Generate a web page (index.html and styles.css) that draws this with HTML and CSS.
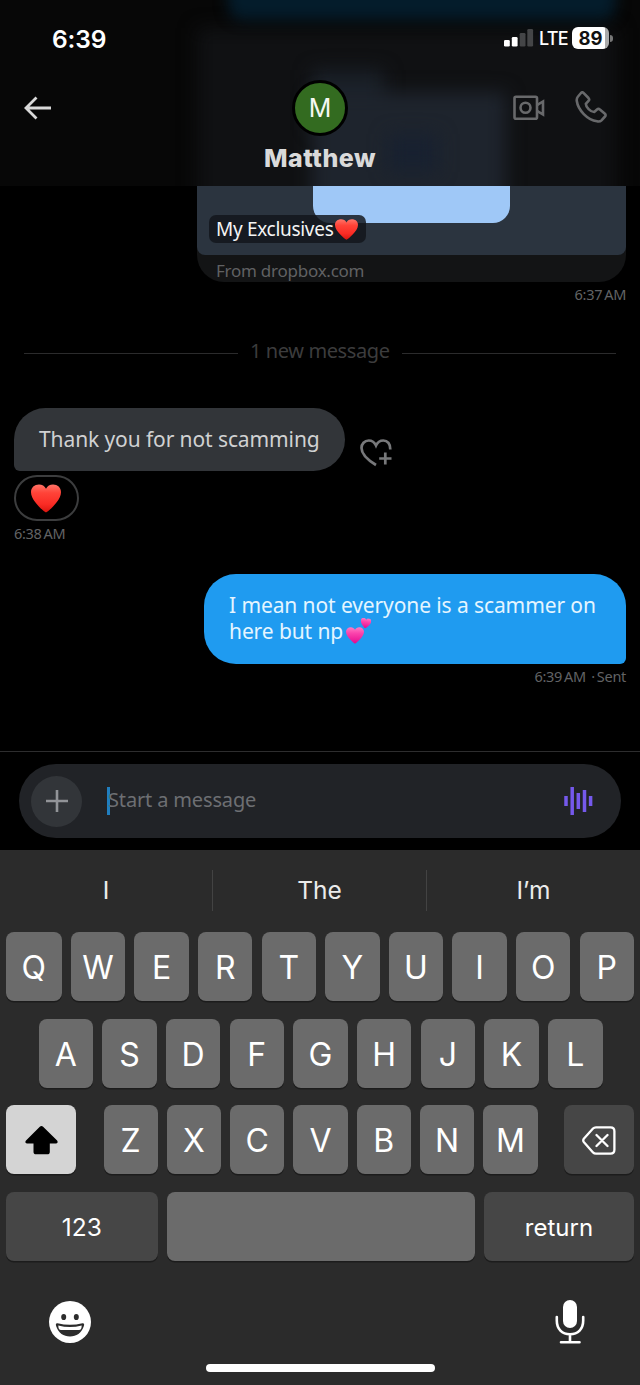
FILE: index.html
```html
<!DOCTYPE html>
<html lang="en">
<head>
<meta charset="utf-8">
<title>Matthew</title>
<link rel="stylesheet" href="styles.css">
</head>
<body>
<svg class="defs" width="0" height="0" aria-hidden="true">
  <defs>
    <linearGradient id="red" x1="0" y1="0" x2="0" y2="1"><stop offset="0" stop-color="#ff7468"/><stop offset=".3" stop-color="#ff4338"/><stop offset=".7" stop-color="#fa2c25"/><stop offset="1" stop-color="#d9150f"/></linearGradient>
    <linearGradient id="pink" x1="0" y1="0" x2="0" y2="1"><stop offset="0" stop-color="#ff7cc4"/><stop offset=".35" stop-color="#fb45ad"/><stop offset="1" stop-color="#e5098f"/></linearGradient>
    <symbol id="heart" viewBox="0 0 30 30" preserveAspectRatio="none"><path d="M15 29.500C13.500 29 0 17.500 0 8.500C0 3.500 3.500 .5 8 .5c3 0 5.700 1.500 7 4.500C16.300 2 19 .5 22 .5c4.500 0 8 3 8 8C30 17.500 16.500 29 15 29.500Z"/></symbol>
  </defs>
</svg>
<div class="phone">
  <header class="header">
    <div class="glow glow-card"></div>
    <div class="glow glow-blue"></div>
    <div class="glow glow-tab"></div>
    <div class="glow glow-folder"></div>
    <div class="glow glow-logo"></div>
    <div class="status">
      <span class="clock">6:39</span>
      <div class="indicators">
        <svg width="30" height="18" viewBox="0 0 30 18"><rect x="0" y="11" width="5.800" height="6.500" rx="1.300" fill="#fff"/><rect x="7.800" y="8" width="5.800" height="9.500" rx="1.300" fill="#fff"/><rect x="15.700" y="4" width="5.800" height="13.500" rx="1.300" fill="#444547"/><rect x="23.300" y="0" width="5.800" height="17.500" rx="1.300" fill="#444547"/></svg>
        <span class="lte">LTE</span>
        <span class="battery">89</span><i class="nub"></i>
      </div>
    </div>
    <div class="nav">
      <svg class="back" width="28" height="24" viewBox="0 0 28 24" fill="none" stroke="#d9d9d9" stroke-width="2.800"><path d="M27 12H2M12.500 1.500L2 12l10.500 10.500"/></svg>
      <div class="person"><div class="avatar">M</div><h1>Matthew</h1></div>
      <div class="calls">
        <svg width="32" height="26" viewBox="0 0 32 26" fill="none" stroke="#68696b" stroke-width="2.600"><rect x="1.500" y="1.800" width="22.500" height="22" rx="1.500"/><circle cx="12.500" cy="12.800" r="5"/><path d="M24 10.200L30 6.500v13l-6-3.700"/></svg>
        <svg width="32" height="32" viewBox="0 0 32 32" fill="none" stroke="#68696b" stroke-width="2.600" stroke-linejoin="round"><path d="M8.500 1.800L13.500 7c.8.900.8 2 0 2.800l-2.700 3C10.800 16 15.500 21 19.200 21l2.800-2.500c.9-.8 2-.8 2.900 0l5 4.200c.9.800.9 2 .1 2.800l-3.500 3.800c-1 1-3 1.300-4.500 1C12.500 29 3 19 1.800 10c-.3-2 .2-3.400 1.200-4.500l3-3.500c.7-.8 1.800-.9 2.500-.2Z"/></svg>
      </div>
    </div>
  </header>

  <main class="chat">
    <section class="link-card">
      <div class="preview"><div class="folder"></div>
        <div class="label">My Exclusives<svg class="em" width="23" height="21" fill="url(#red)"><use href="#heart"/></svg></div>
      </div>
      <div class="source">From dropbox.com</div>
    </section>
    <time class="time sent-time">6:37<span class="thin"></span>AM</time>
    <div class="divider"><i class="rule-left"></i><span>1 new message</span><i class="rule-right"></i></div>
    <div class="incoming">
      <div class="bubble grey">Thank you for not scamming</div>
      <svg width="32" height="28" viewBox="0 0 32 28" fill="none" stroke="#77787a" stroke-width="2.700"><path d="M16 26C7 20.500 1.500 15 1.500 9C1.500 5 4.500 1.500 8.700 1.500C12 1.500 14.600 3.500 16 6.500C17.400 3.500 20 1.500 23.300 1.500C27.500 1.500 30.500 5 30.300 10.500M25.300 13.500v12M19.200 19.500h12.300"/></svg>
    </div>
    <div class="reaction"><svg width="30" height="29" fill="url(#red)"><use href="#heart"/></svg></div>
    <time class="time">6:38<span class="thin"></span>AM</time>
    <div class="bubble blue">I mean not everyone is a scammer on<br>here but np<svg class="pair" width="26" height="26" viewBox="0 0 26 26" fill="url(#pink)"><use href="#heart" x="0" y="9" width="18" height="17"/><use href="#heart" x="14.500" y="0" width="10.500" height="10.500" transform="rotate(8 20 5)"/></svg></div>
    <time class="time sent-time">6:39<span class="thin"></span>AM <span class="sent">·<span class="thin"></span>Sent</span></time>
  </main>

  <div class="composer">
    <div class="field">
      <div class="plus"><svg width="22" height="22" viewBox="0 0 22 22" stroke="#929498" stroke-width="2.600"><path d="M11 0v22M0 11h22"/></svg></div>
      <i class="caret"></i><span class="placeholder">Start a message</span>
      <svg class="wave" width="30" height="30" viewBox="0 0 30 30" stroke="#7559ec" stroke-width="3.500"><path d="M2 10v10M8.200 1v28M14.300 7v16M20.500 4v22M26.600 10v10"/></svg>
    </div>
  </div>

  <section class="keyboard">
    <div class="suggest"><span>I</span><span>The</span><span>I’m</span></div>
    <div class="keys">
      <div class="row top"><b>Q</b><b>W</b><b>E</b><b>R</b><b>T</b><b>Y</b><b>U</b><b>I</b><b>O</b><b>P</b></div>
      <div class="row home"><b>A</b><b>S</b><b>D</b><b>F</b><b>G</b><b>H</b><b>J</b><b>K</b><b>L</b></div>
      <div class="row bottom">
        <b class="shift"><svg width="33" height="29" viewBox="0 0 33 29"><path d="M14.800.8c1-1 2.300-1 3.300 0l14 13.800c1 1.200.5 2.800-1 2.800h-6.300v8.300c0 1.800-.9 2.600-2.600 2.600H11.200c-1.800 0-2.700-.8-2.700-2.600v-8.300H2c-1.600 0-2.200-1.600-1-2.800Z" fill="#000"/></svg></b>
        <div class="letters"><b>Z</b><b>X</b><b>C</b><b>V</b><b>B</b><b>N</b><b>M</b></div>
        <b class="dark"><svg width="34" height="29" viewBox="0 0 34 29" fill="none" stroke="#fff" stroke-width="2.300" stroke-linejoin="round" stroke-linecap="round"><path d="M14 1.300h14.500c2.600 0 3.900 1.300 3.900 3.900v18.500c0 2.600-1.300 3.900-3.900 3.900H14c-1.300 0-2.200-.4-3-1.200L2 16.300c-1-1.200-1-2.500 0-3.700l9-10C11.800 1.700 12.700 1.300 14 1.300ZM14.500 9l11 11M25.500 9l-11 11"/></svg></b>
      </div>
      <div class="row last"><b class="dark">123</b><b></b><b class="dark ret">return</b></div>
    </div>
    <div class="tools">
      <svg width="42" height="42" viewBox="0 0 42 42"><circle cx="21" cy="21" r="21" fill="#fff"/><ellipse cx="14.700" cy="16" rx="2.500" ry="3.100" fill="#2c2c2c"/><ellipse cx="27.300" cy="16" rx="2.500" ry="3.100" fill="#2c2c2c"/><path d="M8.500 22.200Q21 25.500 33.500 22.200Q36 22 34.700 25.500C32.500 32 27.500 35.500 21 35.500S9.500 32 7.300 25.500Q6 22 8.500 22.200Z" fill="#2c2c2c"/><path d="M9.300 24.500Q21 27.500 32.700 24.500Q32.700 29 30 29H12Q9.300 29 9.300 24.500Z" fill="#fff"/></svg>
      <svg width="30" height="44" viewBox="0 0 30 44" fill="none" stroke="#fff" stroke-width="2.600" stroke-linecap="round"><rect x="8" y="0" width="14" height="28" rx="7" fill="#fff" stroke="none"/><path d="M1.800 17v3.500C1.800 29 7 34.200 15 34.200S28.200 29 28.200 20.500V17M15 35v7M6 42.300h18.500"/></svg>
    </div>
    <div class="home-bar"></div>
  </section>
</div>
</body>
</html>
```
FILE: styles.css
```css
* { box-sizing: border-box; }
body { margin: 0; background: #000; font-family: "Noto Sans", "Open Sans", sans-serif; }
svg { display: block; flex: none; }
.defs { position: absolute; }
.phone { width: 640px; height: 1385px; display: flex; flex-direction: column; overflow: hidden; }

.header { position: relative; height: 186px; background: #070707; overflow: hidden; flex: none; font-family: Inter, sans-serif; }
.status, .nav { position: relative; display: flex; justify-content: space-between; }
.glow { position: absolute; }
.glow-card { left: 197px; top: 28px; width: 420px; height: 190px; background: #101113; filter: blur(9px); }
.glow-blue { left: 228px; top: -30px; width: 388px; height: 50px; border-radius: 15px; background: #041c2b; filter: blur(7px); }
.glow-tab { left: 312px; top: 70px; width: 72px; height: 60px; background: #1a2028; filter: blur(9px); }
.glow-folder { left: 312px; top: 92px; width: 194px; height: 130px; background: #1e242d; filter: blur(9px); }
.glow-logo { left: 388px; top: 134px; width: 50px; height: 38px; background: #182130; filter: blur(9px); }
.status { height: 76px; padding: 0 27px 0 52px; align-items: center; color: #fff; }
.clock { font-size: 24.5px; font-weight: 600; line-height: 32px; padding-top: 1px; letter-spacing: -.1px; }
.indicators { display: flex; align-items: center; }
.lte { font-size: 18px; font-weight: 500; margin-left: 5px; padding-top: 1px; width: 28px; letter-spacing: -.7px; }
.battery { width: 37px; height: 22px; margin-left: 5px; border-radius: 6px; background: linear-gradient(90deg, #fff 89%, #aaa 89%); color: #111; font-size: 18.5px; font-weight: 700; line-height: 23px; text-align: center; }
.nub { width: 3px; height: 7px; border-radius: 0 3px 3px 0; background: #777; margin-left: 1px; }
.nav { padding: 4px 33px 0 24px; display: grid; grid-template-columns: 1fr 120px 1fr; }
.back { margin-top: 16px; }
.person { display: flex; flex-direction: column; align-items: center; margin: 0 -4.500px 0 4.500px; }
.avatar { width: 56px; height: 56px; border: 3px solid #000; border-radius: 50%; background: #336b20; color: #f5f8f2; font-size: 25px; line-height: 50px; text-align: center; }
h1 { margin: 7px 0 0; font-size: 25px; line-height: 30px; font-weight: 800; letter-spacing: .45px; color: #dadada; }
.calls { display: flex; gap: 30px; justify-content: flex-end; align-items: flex-start; padding-top: 11px; }
.calls svg:first-child { margin-top: 4px; }

.chat { height: 565px; padding: 0 14px; display: flex; flex-direction: column; align-items: flex-start; flex: none; }
.link-card { align-self: flex-end; width: 429px; height: 96px; background: #131415; border-radius: 0 0 27px 27px; overflow: hidden; flex: none; }
.preview { height: 69px; background: #2b343f; border-radius: 0 0 8px 8px; position: relative; padding: 29px 0 0 12px; }
.folder { position: absolute; left: 116px; top: 0; width: 197px; height: 37px; background: #9fc8f7; border-radius: 0 0 17px 17px; }
.label { position: relative; display: flex; align-items: center; width: 157px; height: 28px; padding-left: 7px; border-radius: 7px; background: rgba(18, 22, 28, .83); color: #f4f4f4; font-size: 19px; letter-spacing: -.3px; white-space: nowrap; }
.em { margin-left: 2px; }
.source { padding-left: 19px; font-size: 17px; line-height: 24px; padding-top: 4px; letter-spacing: -.25px; color: #606163; }
.time { font-size: 14.500px; line-height: 18px; margin-top: 3px; letter-spacing: -.3px; color: #626365; white-space: nowrap; }
.sent-time { align-self: flex-end; }
.thin { display: inline-block; width: 2px; }
.sent { margin-left: 2px; }
.divider { width: 592px; margin: 33px 0 0 10px; display: flex; align-items: center; line-height: 28px; height: 30px; color: #3c3c3d; font-size: 20px; letter-spacing: -.4px; }
.divider i { height: 1px; background: #2b2b2c; margin-top: 4px; }
.rule-left { width: 214px; }
.rule-right { width: 214px; margin-left: auto; }
.divider span { margin-left: 12px; white-space: nowrap; }
.incoming { display: flex; gap: 15px; align-items: flex-end; margin-top: 42px; }
.incoming svg { margin-bottom: 4px; }
.bubble { font-size: 21px; line-height: 26px; letter-spacing: -.1px; white-space: nowrap; }
.grey { width: 331px; height: 63px; padding: 18px 25px; color: #d0d1d2; background: #323539; border-radius: 32px 32px 32px 6px; }
.reaction { width: 65px; height: 46px; margin-top: 4px; padding-right: 2px; border: 2px solid #3c3d3e; border-radius: 23px; display: grid; place-items: center; }
.blue { align-self: flex-end; width: 422px; height: 90px; margin-top: 32px; padding: 18px 25px; background: #1f9bf0; color: #e5f5ff; border-radius: 32px 32px 6px 32px; flex: none; }
.pair { display: inline-block; margin-left: 3px; vertical-align: -5px; }

.composer { height: 99px; border-top: 1px solid #2d2d2e; padding: 12px 19px; flex: none; }
.field { height: 74px; border-radius: 37px; background: #212327; display: flex; align-items: center; padding: 0 27px 0 12px; }
.plus { width: 51px; height: 51px; border-radius: 50%; background: #323539; display: grid; place-items: center; }
.caret { width: 3px; height: 28px; margin-left: 25px; background: #207ebf; }
.placeholder { color: #6d6f73; font-size: 20px; line-height: 26px; padding-bottom: 2px; letter-spacing: -.15px; margin-left: -2px; white-space: nowrap; }
.wave { margin-left: auto; }

.keyboard { height: 535px; background: #2b2b2b; color: #fff; font-family: Inter, sans-serif; flex: none; display: flex; flex-direction: column; }
.suggest { display: grid; grid-template-columns: 212px 214px 214px; height: 39px; margin-top: 20px; text-align: center; font-size: 24.500px; line-height: 41px; color: #ebebeb; }
.suggest span + span { border-left: 1.500px solid #434343; }
.keys { padding: 23px 6px 0; display: grid; grid-auto-rows: 69px; row-gap: 17.500px; }
.row { display: grid; grid-auto-flow: column; grid-auto-columns: 1fr; column-gap: 9.300px; }
.row b, .letters b { background: #6b6b6b; border-radius: 8px; font-size: 32px; font-weight: 400; padding-top: 2px; display: flex; align-items: center; justify-content: center; box-shadow: 0 1.500px 0 #1c1c1c; }
.top { grid-auto-columns: auto; grid-template-columns: 55.500px repeat(9, 1fr); }
.home { padding: 0 31.500px 0 32.500px; }
.bottom { grid-auto-flow: row; grid-template-columns: 70px 1fr 70px; column-gap: 27px; }
.letters { display: grid; grid-template-columns: repeat(7, 1fr); column-gap: 9.300px; margin: 0 -.5px 0 .5px; }
.last { grid-auto-flow: row; grid-template-columns: 151.500px 1fr 150px; column-gap: 9.300px; }
.row .shift { background: #d4d4d4; }
.row .dark { background: #464646; }
.last .dark { font-size: 24.500px; }
.last .ret { font-size: 24px; }
.tools { display: flex; justify-content: space-between; align-items: center; padding: 39.500px 55px 0 49px; }
.home-bar { width: 229px; height: 8px; border-radius: 4px; background: #fff; margin: 20px auto 0; }
```
